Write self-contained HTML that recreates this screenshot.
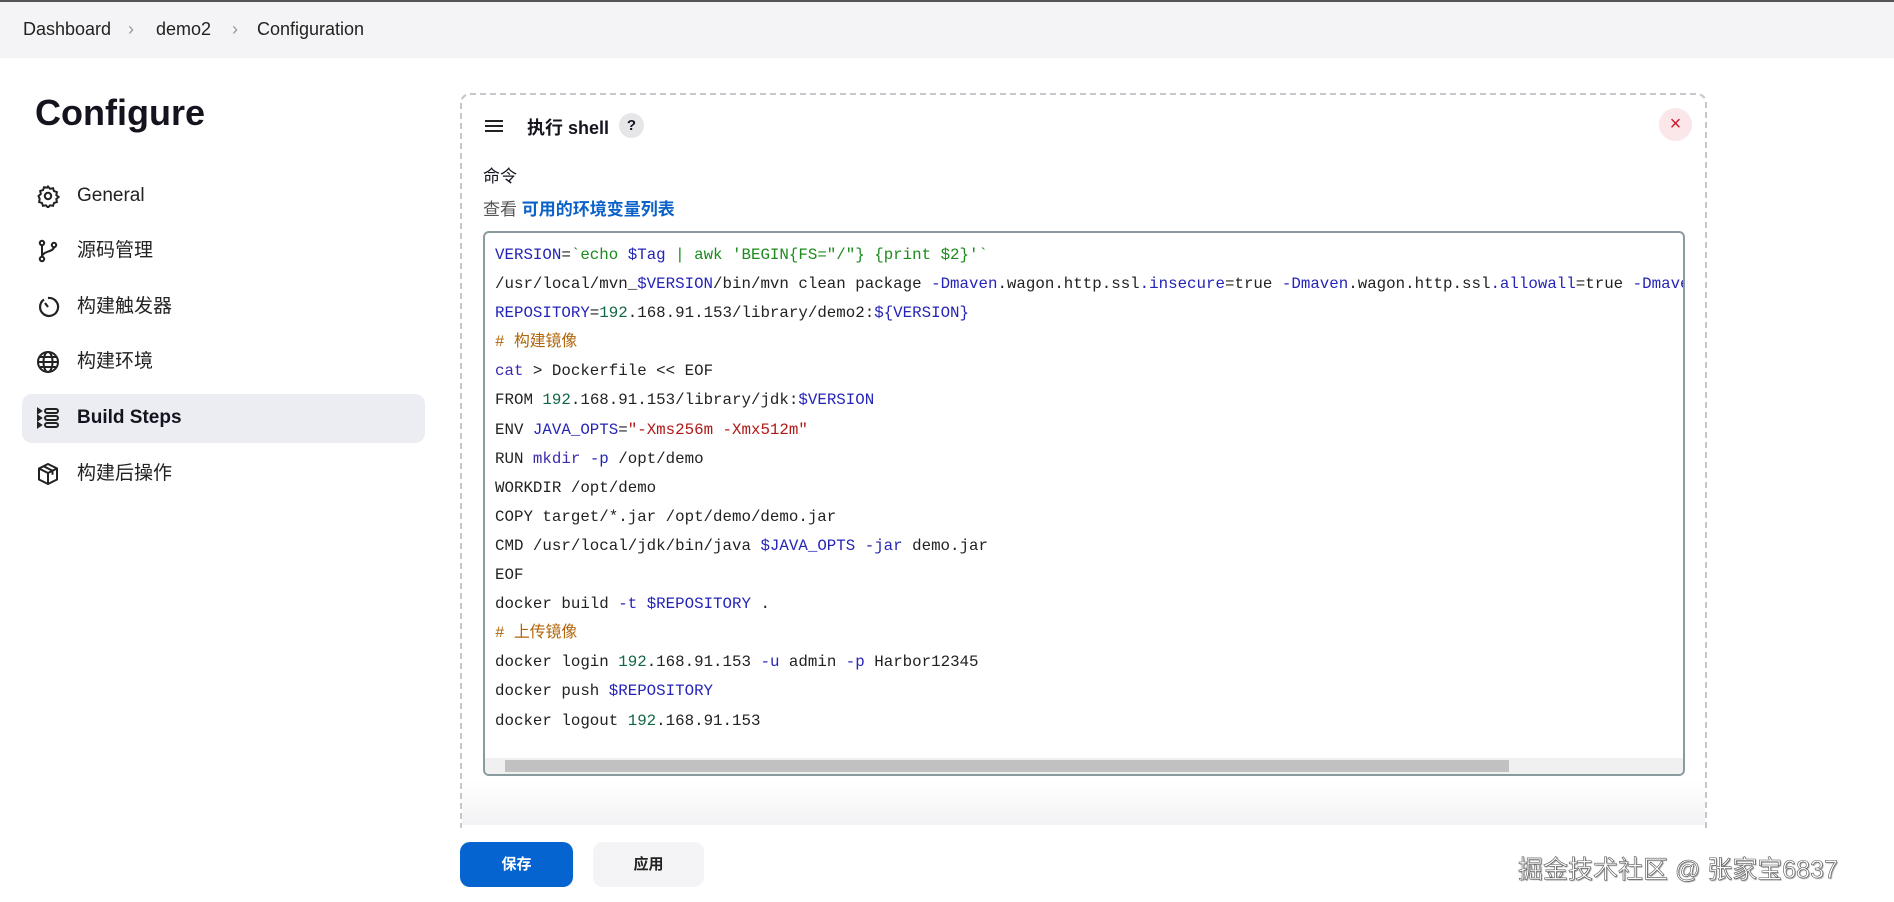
<!DOCTYPE html>
<html><head><meta charset="utf-8">
<style>
*{box-sizing:border-box;margin:0;padding:0}
body{width:1894px;height:902px;overflow:hidden;background:#fff;font-family:"Liberation Sans","Noto Sans CJK SC",sans-serif;color:#14141f;position:relative}
.bc{position:absolute;left:0;top:0;width:1894px;height:58px;background:#f4f4f6;border-top:2px solid #555;font-size:18px;color:#222}
.bc span{position:absolute;top:17px}
.bc .sep{color:#999}
h1{position:absolute;left:35px;top:92px;font-size:36px;font-weight:700;color:#14141f}
.nav{position:absolute;left:34px;font-size:19px;color:#222;height:30px;line-height:30px}
.nav svg{position:absolute;left:2px;top:3px}
.nav span{position:absolute;left:43px;white-space:nowrap}
.hl{position:absolute;left:22px;top:394px;width:403px;height:49px;background:#ebedf2;border-radius:10px}
.box{position:absolute;left:460px;top:93px;width:1247px;height:735px;border:2px dashed #c6c6cc;border-bottom:none;border-radius:10px 10px 0 0}
.fade{position:absolute;left:462px;top:780px;width:1243px;height:45px;background:linear-gradient(#fff,#f3f3f5)}
.ta{position:absolute;left:483px;top:231px;width:1202px;height:545px;border:2px solid #8a9ba0;border-radius:6px;overflow:hidden;background:#fff}
.code{position:absolute;left:10px;top:8px;font-family:"Liberation Mono","Noto Sans CJK SC",monospace;font-size:15.8px;line-height:29.1px;white-space:pre;color:#222}
.v{color:#2424b8}.s{color:#1c8a1c}.n{color:#116644}.r{color:#b01818}.c{color:#b0650a}.b{color:#3a2ab0}
.sb{position:absolute;left:0;bottom:0;width:100%;height:16px;background:#f0f0f0}
.thumb{position:absolute;left:20px;top:2px;width:1004px;height:12px;background:#c1c1c1}
.btn{position:absolute;top:842px;height:45px;border-radius:10px;font-size:15px;text-align:center;line-height:45px;font-weight:700}
.wm{position:absolute;left:1518px;top:850px;font-size:25px;color:#fff;-webkit-text-stroke:0.6px #555;text-shadow:1px 1px 1px #999;white-space:nowrap}
</style></head><body>
<div class="bc"><span style="left:23px">Dashboard</span><span class="sep" style="left:128px">›</span><span style="left:156px">demo2</span><span class="sep" style="left:232px">›</span><span style="left:257px">Configuration</span></div>
<h1>Configure</h1>
<div class="hl"></div>
<div class="nav" style="top:181px"><svg width="24" height="24" viewBox="0 0 24 24" fill="none" stroke="#222" stroke-width="2"><circle cx="12" cy="12" r="3.2"/><path d="M12 2.5l2 2.3 3-.6 1 2.9 2.9 1-.6 3 2.3 1.9-2.3 2 .6 3-2.9 1-1 2.9-3-.6-2 2.3-2-2.3-3 .6-1-2.9-2.9-1 .6-3L2.5 12l2.3-2-.6-3 2.9-1 1-2.9 3 .6z"/></svg><span>General</span></div>
<div class="nav" style="top:236px"><svg width="24" height="24" viewBox="0 0 24 24" fill="none" stroke="#222" stroke-width="2"><circle cx="6" cy="4" r="2.2"/><circle cx="6" cy="20" r="2.2"/><circle cx="18" cy="6" r="2.2"/><path d="M6 6v12M18 8c0 5-12 4-12 10"/></svg><span>源码管理</span></div>
<div class="nav" style="top:292px"><svg width="24" height="24" viewBox="0 0 24 24" fill="none" stroke="#222" stroke-width="2.2"><path d="M8 4.5A9 9 0 1 0 12 3v0"/><path d="M12 12l-3-4"/></svg><span>构建触发器</span></div>
<div class="nav" style="top:347px"><svg width="24" height="24" viewBox="0 0 24 24" fill="none" stroke="#222" stroke-width="2"><circle cx="12" cy="12" r="10"/><ellipse cx="12" cy="12" rx="4.5" ry="10"/><path d="M2 12h20M4 7h16M4 17h16"/></svg><span>构建环境</span></div>
<div class="nav" style="top:403px;font-weight:700;color:#14141f"><svg width="24" height="24" viewBox="0 0 24 24" fill="none" stroke="#222" stroke-width="2"><path d="M2 3l3 2-3 2zM2 10l3 2-3 2zM2 17l3 2-3 2z"/><rect x="9" y="3" width="13" height="4" rx="2"/><rect x="9" y="10" width="13" height="4" rx="2"/><rect x="9" y="17" width="13" height="4" rx="2"/></svg><span>Build Steps</span></div>
<div class="nav" style="top:459px"><svg width="24" height="24" viewBox="0 0 24 24" fill="none" stroke="#222" stroke-width="2"><path d="M12 2l9 4.5v11L12 22l-9-4.5v-11z"/><path d="M3 6.5l9 4.5 9-4.5M12 11v11M7.5 4.2l9 4.5v4"/></svg><span>构建后操作</span></div>

<div class="box"></div>
<div class="fade"></div>
<svg style="position:absolute;left:484px;top:118px" width="20" height="16" viewBox="0 0 20 16"><path d="M1 3h18M1 8h18M1 13h18" stroke="#222" stroke-width="2"/></svg>
<div style="position:absolute;left:527px;top:114px;font-size:18px;font-weight:700">执行 shell</div>
<div style="position:absolute;left:619px;top:113px;width:25px;height:25px;border-radius:50%;background:#e6e6e9;text-align:center;line-height:25px;font-size:15px;font-weight:700">?</div>
<div style="position:absolute;left:1659px;top:108px;width:33px;height:33px;border-radius:50%;background:#fbe6e9;text-align:center;line-height:33px;font-size:20px;color:#d01b2e">×</div>
<div style="position:absolute;left:483px;top:162px;font-size:17px">命令</div>
<div style="position:absolute;left:483px;top:195px;font-size:17px;color:#555">查看 <b style="color:#0a62c9">可用的环境变量列表</b></div>

<div class="ta"><div class="code"><span class="v">VERSION</span>=<span class="s">`echo <span class="v">$Tag</span> | awk 'BEGIN{FS="/"} {print $2}'`</span>
/usr/local/mvn_<span class="v">$VERSION</span>/bin/mvn clean package <span class="v">-Dmaven</span>.wagon.http.ssl<span class="v">.insecure</span>=true <span class="v">-Dmaven</span>.wagon.http.ssl<span class="v">.allowall</span>=true <span class="v">-Dmaven</span>.wagon.http.ssl.ignore.validity.dates=true
<span class="v">REPOSITORY</span>=<span class="n">192</span>.168.91.153/library/demo2:<span class="v">${VERSION}</span>
<span class="c"># 构建镜像</span>
<span class="b">cat</span> &gt; Dockerfile &lt;&lt; EOF
FROM <span class="n">192</span>.168.91.153/library/jdk:<span class="v">$VERSION</span>
ENV <span class="v">JAVA_OPTS</span>=<span class="r">"-Xms256m -Xmx512m"</span>
RUN <span class="b">mkdir</span> <span class="v">-p</span> /opt/demo
WORKDIR /opt/demo
COPY target/*.jar /opt/demo/demo.jar
CMD /usr/local/jdk/bin/java <span class="v">$JAVA_OPTS</span> <span class="v">-jar</span> demo.jar
EOF
docker build <span class="v">-t</span> <span class="v">$REPOSITORY</span> .
<span class="c"># 上传镜像</span>
docker login <span class="n">192</span>.168.91.153 <span class="v">-u</span> admin <span class="v">-p</span> Harbor12345
docker push <span class="v">$REPOSITORY</span>
docker logout <span class="n">192</span>.168.91.153</div>
<div class="sb"><div class="thumb"></div></div></div>

<div class="btn" style="left:460px;width:113px;background:#0664d0;color:#fff">保存</div>
<div class="btn" style="left:593px;width:111px;background:#f4f4f6;color:#222">应用</div>
<div class="wm">掘金技术社区 @ 张家宝6837</div>
</body></html>
